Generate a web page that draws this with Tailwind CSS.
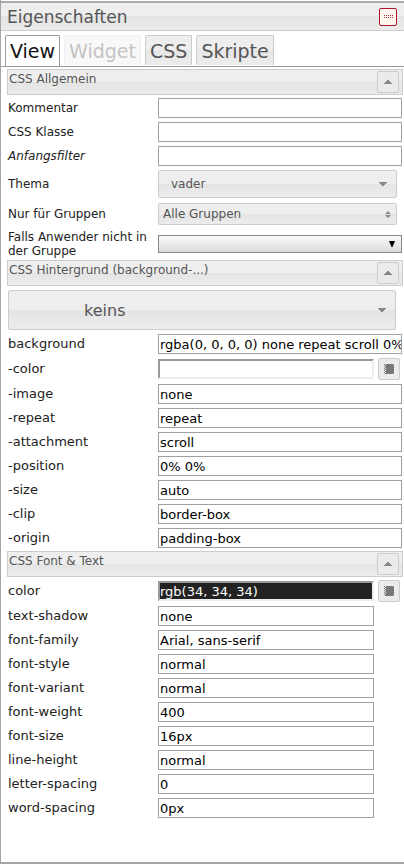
<!DOCTYPE html>
<html lang="de">
<head>
<meta charset="utf-8">
<title>Eigenschaften</title>
<script src="https://cdn.jsdelivr.net/npm/@tailwindcss/browser@4"></script>
</head>
<body class="bg-white font-['DejaVu_Sans',sans-serif] text-[13px] leading-4 text-[#222]">
<svg class="hidden">
  <symbol id="up" viewBox="0 0 8 4"><path d="M3 0h2v1h1v1h1v1h1v1H0V3h1V2h1V1h1z"/></symbol>
  <symbol id="down" viewBox="0 0 8 4"><path d="M0 0h8v1H7v1H6v1H5v1H3V3H2V2H1V1H0z"/></symbol>
  <symbol id="book" viewBox="0 0 10 10"><path d="M2 0h7l1 1v8l-1 1H2zM0 0h1v1H0zM0 2h1v1H0zM0 4h1v1H0zM0 6h1v1H0zM0 8h1v1H0z"/><path d="M1 1h1v1H1zM1 3h1v1H1zM1 5h1v1H1zM1 7h1v1H1zM1 9h1v1H1z"/></symbol>
</svg>
<main class="flex min-h-screen flex-col border-b-2 border-l border-[#a6a6a6] pb-[42px]">
  <header class="mt-px flex h-[30px] items-center justify-between border-t-2 border-b border-t-[#aaa] border-b-[#ccc] bg-[linear-gradient(#eee_0_50%,#e4e4e4_50%,#ececec)] pr-[7px] pl-1.5">
    <h1 class="text-[17px] leading-5 text-[#555]">Eigenschaften</h1>
    <button type="button" aria-label="Schließen" class="flex size-[18px] items-center justify-center rounded-xs border border-[#b01530] bg-[#fff8f0]">
      <svg class="h-[3px] w-[9px] fill-[#c03040]" viewBox="0 0 9 3"><path d="M0 0h1v1H0zM2 0h1v1H2zM4 0h1v1H4zM6 0h1v1H6zM8 0h1v1H8zM0 2h1v1H0zM2 2h1v1H2zM4 2h1v1H4zM6 2h1v1H6zM8 2h1v1H8z"/></svg>
    </button>
  </header>
  <nav class="flex h-9 items-start gap-1 border-b border-[#999] px-1 pt-1 text-[19px] leading-7 text-[#555]">
    <button type="button" class="h-[31px] rounded-t-xs border border-b-0 border-[#999] bg-white px-1 text-[#111]">View</button>
    <button type="button" disabled class="h-[30px] rounded-t-xs border border-b-0 border-[#f0f0f0] bg-[#f8f8f8] px-1 text-[#c4c4c4]">Widget</button>
    <button type="button" class="h-[30px] rounded-t-xs border border-b-0 border-[#ccc] bg-[linear-gradient(#eee_0_50%,#e6e6e6_50%,#ececec)] px-1">CSS</button>
    <button type="button" class="h-[30px] rounded-t-xs border border-b-0 border-[#ccc] bg-[linear-gradient(#eee_0_50%,#e6e6e6_50%,#ececec)] px-1">Skripte</button>
  </nav>

  <section class="pt-px">
    <div class="my-px mr-px ml-1.5 flex h-[26px] justify-between border border-[#ccc] bg-[linear-gradient(#eee_0_50%,#e4e4e4_50%,#ececec)] pt-px pr-[3px] pl-px">
      <h2 class="pt-px text-[12px] leading-[14px] text-[#555]">CSS Allgemein</h2>
      <button type="button" aria-label="CSS Allgemein einklappen" class="flex size-[22px] items-center justify-center rounded-xs border border-[#ccc] bg-[#ebebeb]"><svg class="h-1 w-2 fill-[#888]"><use href="#up"/></svg></button>
    </div>
    <div class="grid h-6 grid-cols-[150px_1fr] items-center pr-0.5 pl-[7px]"><label for="kommentar" class="text-[12px]">Kommentar</label><input id="kommentar" class="h-5 w-full min-w-0 border border-[#a0a0a0] bg-white px-px text-black"></div>
    <div class="grid h-6 grid-cols-[150px_1fr] items-center pr-0.5 pl-[7px]"><label for="klasse" class="text-[12px]">CSS Klasse</label><input id="klasse" class="h-5 w-full min-w-0 border border-[#a0a0a0] bg-white px-px text-black"></div>
    <div class="grid h-6 grid-cols-[150px_1fr] items-center pr-0.5 pl-[7px]"><label for="filter" class="text-[12px] italic">Anfangsfilter</label><input id="filter" class="h-5 w-full min-w-0 border border-[#a0a0a0] bg-white px-px text-black"></div>
    <div class="grid h-8 grid-cols-[150px_1fr] items-center pr-[7px] pl-[7px]"><label for="thema" class="text-[12px]">Thema</label>
      <div class="relative"><select id="thema" class="block h-7 w-full appearance-none rounded-xs border border-[#ccc] bg-[linear-gradient(#eee_0_50%,#e4e4e4_50%,#ececec)] pl-3 text-[12px] text-[#555]"><option>vader</option></select><svg class="pointer-events-none absolute top-3 right-2.5 h-1 w-2 fill-[#888]"><use href="#down"/></svg></div></div>
    <div class="grid h-7 grid-cols-[150px_1fr] items-center pr-[7px] pl-[7px]"><label for="gruppen" class="text-[12px]">Nur für Gruppen</label>
      <div class="relative"><select id="gruppen" class="block h-[22px] w-full appearance-none rounded-xs border border-[#ccc] bg-[linear-gradient(#eee_0_50%,#e4e4e4_50%,#ececec)] pl-1 text-[12px] text-[#555]"><option>Alle Gruppen</option></select><svg class="pointer-events-none absolute top-2 right-1.5 h-[7px] w-[6px] fill-[#888]" viewBox="0 0 6 7"><path d="M3 0l3 3H0zM3 7l3-3H0z"/></svg></div></div>
    <div class="grid h-[31px] grid-cols-[150px_1fr] items-center pr-0.5 pl-[7px]"><label for="falls" class="text-[12px] leading-[14px]">Falls Anwender nicht in der Gruppe</label>
      <div class="relative"><select id="falls" class="block h-[18px] w-full appearance-none border border-[#888] bg-linear-to-b from-[#fafafa] to-[#dcdcdc]"><option></option></select><svg class="pointer-events-none absolute top-1.5 right-[7px] h-1.5 w-1.5 fill-black" viewBox="0 0 6 6"><path d="M0 0h6L3.5 6h-1z"/></svg></div></div>
  </section>

  <section>
    <div class="my-px mr-px ml-1.5 flex h-[26px] justify-between border border-[#ccc] bg-[linear-gradient(#eee_0_50%,#e4e4e4_50%,#ececec)] pt-px pr-[3px] pl-px">
      <h2 class="pt-px text-[12px] leading-[14px] text-[#555]">CSS Hintergrund (background-...)</h2>
      <button type="button" aria-label="CSS Hintergrund einklappen" class="flex size-[22px] items-center justify-center rounded-xs border border-[#ccc] bg-[#ebebeb]"><svg class="h-1 w-2 fill-[#888]"><use href="#up"/></svg></button>
    </div>
    <div class="flex h-[45px] items-center pr-2 pl-[7px]"><div class="relative w-full"><select aria-label="Hintergrund" class="block h-10 w-full appearance-none rounded-xs border border-[#ccc] bg-[linear-gradient(#eee_0_50%,#e4e4e4_50%,#ececec)] pt-0.5 pl-[75px] text-[16px] text-[#555]"><option>keins</option></select><svg class="pointer-events-none absolute top-[18px] right-2.5 h-1 w-2 fill-[#888]"><use href="#down"/></svg></div></div>
    <div class="grid h-6 grid-cols-[150px_1fr] items-center pr-0.5 pl-[7px]"><label for="bg">background</label><input id="bg" value="rgba(0, 0, 0, 0) none repeat scroll 0% 0%" class="h-5 w-full min-w-0 border border-[#a0a0a0] bg-white pr-0 pl-px text-black"></div>
    <div class="grid h-[26px] grid-cols-[150px_1fr_22px] items-center pr-1 pl-[7px]"><label for="bgcolor">-color</label><input id="bgcolor" class="mr-1 h-5 min-w-0 border-2 border-[#999] border-r-[#eee] border-b-[#eee] bg-white"><button type="button" aria-label="Farbe wählen" class="flex size-[22px] items-center justify-center rounded-xs border border-[#ccc] bg-[#ebebeb]"><svg class="size-2.5 fill-[#777]"><use href="#book"/></svg></button></div>
    <div class="grid h-6 grid-cols-[150px_1fr] items-center pr-0.5 pl-[7px]"><label for="image">-image</label><input id="image" value="none" class="h-5 w-full min-w-0 border border-[#a0a0a0] bg-white px-px text-black"></div>
    <div class="grid h-6 grid-cols-[150px_1fr] items-center pr-0.5 pl-[7px]"><label for="repeat">-repeat</label><input id="repeat" value="repeat" class="h-5 w-full min-w-0 border border-[#a0a0a0] bg-white px-px text-black"></div>
    <div class="grid h-6 grid-cols-[150px_1fr] items-center pr-0.5 pl-[7px]"><label for="attachment">-attachment</label><input id="attachment" value="scroll" class="h-5 w-full min-w-0 border border-[#a0a0a0] bg-white px-px text-black"></div>
    <div class="grid h-6 grid-cols-[150px_1fr] items-center pr-0.5 pl-[7px]"><label for="position">-position</label><input id="position" value="0% 0%" class="h-5 w-full min-w-0 border border-[#a0a0a0] bg-white px-px text-black"></div>
    <div class="grid h-6 grid-cols-[150px_1fr] items-center pr-0.5 pl-[7px]"><label for="size">-size</label><input id="size" value="auto" class="h-5 w-full min-w-0 border border-[#a0a0a0] bg-white px-px text-black"></div>
    <div class="grid h-6 grid-cols-[150px_1fr] items-center pr-0.5 pl-[7px]"><label for="clip">-clip</label><input id="clip" value="border-box" class="h-5 w-full min-w-0 border border-[#a0a0a0] bg-white px-px text-black"></div>
    <div class="grid h-6 grid-cols-[150px_1fr] items-center pr-0.5 pl-[7px]"><label for="origin">-origin</label><input id="origin" value="padding-box" class="h-5 w-full min-w-0 border border-[#a0a0a0] bg-white px-px text-black"></div>
  </section>

  <section>
    <div class="my-px mr-px ml-1.5 flex h-[26px] justify-between border border-[#ccc] bg-[linear-gradient(#eee_0_50%,#e4e4e4_50%,#ececec)] pt-px pr-[3px] pl-px">
      <h2 class="pt-px text-[12px] leading-[14px] text-[#555]">CSS Font &amp; Text</h2>
      <button type="button" aria-label="CSS Font &amp; Text einklappen" class="flex size-[22px] items-center justify-center rounded-xs border border-[#ccc] bg-[#ebebeb]"><svg class="h-1 w-2 fill-[#888]"><use href="#up"/></svg></button>
    </div>
    <div class="grid h-[26px] grid-cols-[150px_1fr_22px] items-center pr-1 pl-[7px]"><label for="color">color</label><input id="color" value="rgb(34, 34, 34)" class="mr-1 h-5 min-w-0 border-2 border-[#999] border-r-[#eee] border-b-[#eee] bg-[#222] text-white"><button type="button" aria-label="Farbe wählen" class="flex size-[22px] items-center justify-center rounded-xs border border-[#ccc] bg-[#ebebeb]"><svg class="size-2.5 fill-[#777]"><use href="#book"/></svg></button></div>
    <div class="grid h-6 grid-cols-[150px_1fr] items-center pr-[30px] pl-[7px]"><label for="shadow">text-shadow</label><input id="shadow" value="none" class="h-5 w-full min-w-0 border border-[#a0a0a0] bg-white px-px text-black"></div>
    <div class="grid h-6 grid-cols-[150px_1fr] items-center pr-[30px] pl-[7px]"><label for="family">font-family</label><input id="family" value="Arial, sans-serif" class="h-5 w-full min-w-0 border border-[#a0a0a0] bg-white px-px text-black"></div>
    <div class="grid h-6 grid-cols-[150px_1fr] items-center pr-[30px] pl-[7px]"><label for="style">font-style</label><input id="style" value="normal" class="h-5 w-full min-w-0 border border-[#a0a0a0] bg-white px-px text-black"></div>
    <div class="grid h-6 grid-cols-[150px_1fr] items-center pr-[30px] pl-[7px]"><label for="variant">font-variant</label><input id="variant" value="normal" class="h-5 w-full min-w-0 border border-[#a0a0a0] bg-white px-px text-black"></div>
    <div class="grid h-6 grid-cols-[150px_1fr] items-center pr-[30px] pl-[7px]"><label for="weight">font-weight</label><input id="weight" value="400" class="h-5 w-full min-w-0 border border-[#a0a0a0] bg-white px-px text-black"></div>
    <div class="grid h-6 grid-cols-[150px_1fr] items-center pr-[30px] pl-[7px]"><label for="fsize">font-size</label><input id="fsize" value="16px" class="h-5 w-full min-w-0 border border-[#a0a0a0] bg-white px-px text-black"></div>
    <div class="grid h-6 grid-cols-[150px_1fr] items-center pr-[30px] pl-[7px]"><label for="lheight">line-height</label><input id="lheight" value="normal" class="h-5 w-full min-w-0 border border-[#a0a0a0] bg-white px-px text-black"></div>
    <div class="grid h-6 grid-cols-[150px_1fr] items-center pr-[30px] pl-[7px]"><label for="lspacing">letter-spacing</label><input id="lspacing" value="0" class="h-5 w-full min-w-0 border border-[#a0a0a0] bg-white px-px text-black"></div>
    <div class="grid h-6 grid-cols-[150px_1fr] items-center pr-[30px] pl-[7px]"><label for="wspacing">word-spacing</label><input id="wspacing" value="0px" class="h-5 w-full min-w-0 border border-[#a0a0a0] bg-white px-px text-black"></div>
  </section>
</main>
</body>
</html>
